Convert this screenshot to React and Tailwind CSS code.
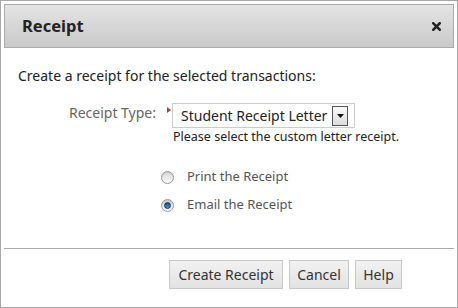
import React from 'react';

const font = { fontFamily: '"Noto Sans", "DejaVu Sans", sans-serif' };

const Radio = ({ checked }) => (
    <span className="w-[13px] h-[13px] rounded-full border border-[#9a9a9a] bg-gradient-to-b from-[#d8d8d8] to-[#fafafa] flex items-center justify-center shadow-[inset_0_1px_1px_#0000001a]">
        {checked && <span className="w-[7px] h-[7px] rounded-full bg-gradient-to-b from-[#1c4f80] to-[#3b9be0] border border-[#0d3558]" />}
    </span>
);

const Button = ({ children, width }) => (
    <button className={`h-[29px] ${width} border border-[#c8c8c8] bg-gradient-to-b from-[#f2f2f2] to-[#e2e2e2] text-[14px] text-[#333] flex items-center justify-center`}>
        {children}
    </button>
);

export default function App() {
    return (
        <div style={font} className="w-[458px] h-[308px] border border-[#a8a8a8] bg-white p-[3px] flex flex-col">
            <div className="h-[44px] border border-[#aaaaaa] bg-gradient-to-b from-[#e4e4e4] to-[#c9c9c9] flex items-center justify-between pl-[17px] pr-[12px]">
                <h1 className="text-[16.5px] font-bold text-[#222] mt-[1px]">Receipt</h1>
                <svg width="9" height="9" viewBox="0 0 9 9" className="mt-[1px]">
                    <path d="M1.3 1.3 L7.7 7.7 M7.7 1.3 L1.3 7.7" stroke="#222" strokeWidth="2.6" strokeLinecap="square" />
                </svg>
            </div>

            <div className="flex-1 flex flex-col">
                <p className="text-[14px] text-[#222] pl-[14px] mt-[18px] leading-[20px]">
                    Create a receipt for the selected transactions:
                </p>

                <div className="flex items-start mt-[17px] pl-[14px]">
                    <span className="w-[138px] text-right text-[14px] text-[#666] leading-[20px] mt-[0px]">Receipt Type:</span>
                    <span className="w-[16px] flex justify-end pr-[1px] pt-[4px]">
                        <svg width="4" height="6" viewBox="0 0 4 6"><path d="M0 0 L4 3 L0 6 Z" fill="#c0392b" /></svg>
                    </span>
                    <div className="flex flex-col">
                        <div className="w-[183px] h-[25px] border border-[#cccccc] flex items-center justify-between pl-[8px] pr-[6px]">
                            <span className="text-[14px] text-[#222]">Student Receipt Letter</span>
                            <span className="w-[16px] h-[20px] border border-[#555] bg-gradient-to-b from-[#fafafa] to-[#dcdcdc] flex items-center justify-center">
                                <svg width="7" height="4" viewBox="0 0 7 4"><path d="M0 0 L7 0 L3.5 4 Z" fill="#111" /></svg>
                            </span>
                        </div>
                        <span className="text-[12.5px] text-[#222] mt-[1px] pl-[1px] leading-[16px]">Please select the custom letter receipt.</span>
                    </div>
                </div>

                <div className="flex flex-col gap-[8px] pl-[157px] mt-[22px]">
                    <label className="flex items-center gap-[13px] h-[20px]">
                        <Radio />
                        <span className="text-[13px] text-[#555]">Print the Receipt</span>
                    </label>
                    <label className="flex items-center gap-[13px] h-[20px]">
                        <Radio checked />
                        <span className="text-[13px] text-[#555]">Email the Receipt</span>
                    </label>
                </div>

                <div className="mt-auto border-t border-[#aaaaaa] pt-[11px] pb-[15px] flex justify-end gap-[6px] pr-[52px]">
                    <Button width="w-[114px]">Create Receipt</Button>
                    <Button width="w-[60px]">Cancel</Button>
                    <Button width="w-[47px]">Help</Button>
                </div>
            </div>
        </div>
    );
}
